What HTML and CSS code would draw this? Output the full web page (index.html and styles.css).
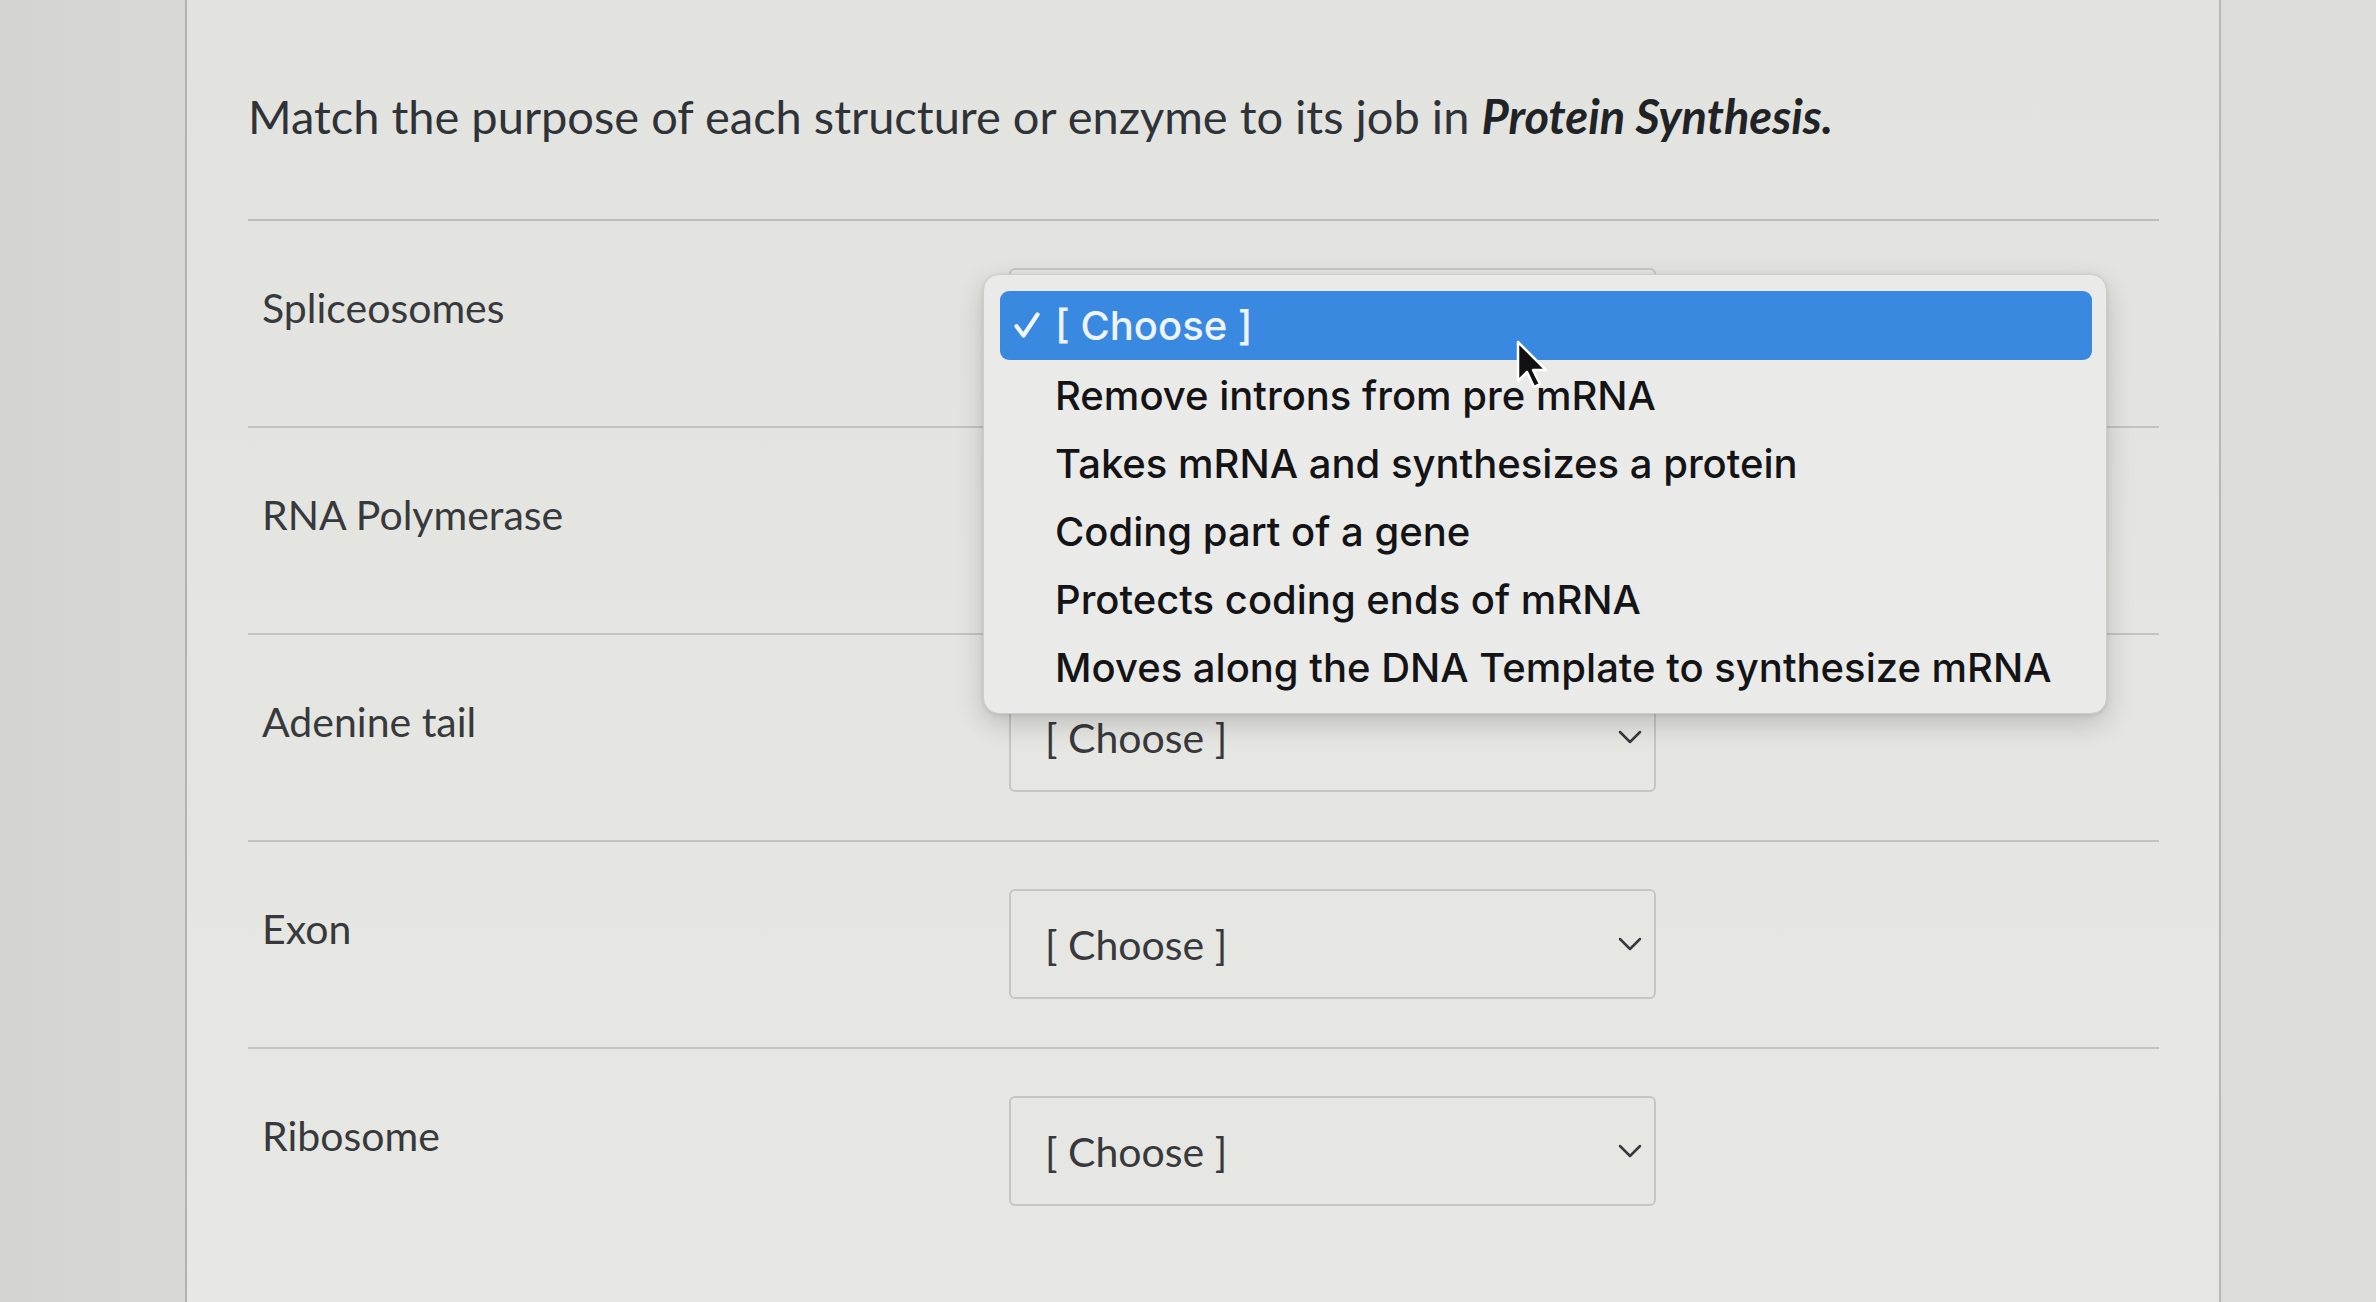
FILE: index.html
```html
<!DOCTYPE html>
<html lang="en">
<head>
<meta charset="utf-8">
<title>Protein Synthesis matching</title>
<link rel="stylesheet" href="styles.css">
</head>
<body>
<div class="page">
  <div class="gutter-left"></div>
  <main class="panel">
    <h1 class="question">Match the purpose of each structure or enzyme to its job in <em>Protein Synthesis.</em></h1>
    <div class="rows">
      <div class="row">
        <div class="label">Spliceosomes</div>
        <div class="select-wrap">
          <div class="select"><span class="select-text">[ Choose ]</span><svg class="chev" viewBox="0 0 24 14"><path d="M2 2 L12 12 L22 2"/></svg></div>
          <div class="menu">
            <div class="opt selected"><svg class="check" viewBox="0 0 24 24"><path d="M3 13 L9 21 L21 3"/></svg>[ Choose ]</div>
            <div class="opt">Remove introns from pre mRNA</div>
            <div class="opt">Takes mRNA and synthesizes a protein</div>
            <div class="opt">Coding part of a gene</div>
            <div class="opt">Protects coding ends of mRNA</div>
            <div class="opt">Moves along the DNA Template to synthesize mRNA</div>
            <svg class="cursor" viewBox="0 0 34 52"><path d="M3 3 L3 42 L12 33 L19 48 L25 45 L18 31 L31 31 Z"/></svg>
          </div>
        </div>
      </div>
      <div class="row">
        <div class="label">RNA Polymerase</div>
        <div class="select-wrap">
          <div class="select"><span class="select-text">[ Choose ]</span><svg class="chev" viewBox="0 0 24 14"><path d="M2 2 L12 12 L22 2"/></svg></div>
        </div>
      </div>
      <div class="row">
        <div class="label">Adenine tail</div>
        <div class="select-wrap">
          <div class="select"><span class="select-text">[ Choose ]</span><svg class="chev" viewBox="0 0 24 14"><path d="M2 2 L12 12 L22 2"/></svg></div>
        </div>
      </div>
      <div class="row">
        <div class="label">Exon</div>
        <div class="select-wrap">
          <div class="select"><span class="select-text">[ Choose ]</span><svg class="chev" viewBox="0 0 24 14"><path d="M2 2 L12 12 L22 2"/></svg></div>
        </div>
      </div>
      <div class="row last">
        <div class="label">Ribosome</div>
        <div class="select-wrap">
          <div class="select"><span class="select-text">[ Choose ]</span><svg class="chev" viewBox="0 0 24 14"><path d="M2 2 L12 12 L22 2"/></svg></div>
        </div>
      </div>
    </div>
  </main>
  <div class="gutter-right"></div>
</div>
</body>
</html>
```
FILE: styles.css
```css
html, body {
  margin: 0;
  padding: 0;
}
body {
  width: 2376px;
  height: 1302px;
  overflow: hidden;
  background: #d9d9d5;
  font-family: Lato, "Liberation Sans", sans-serif;
}
.page {
  display: flex;
  height: 1302px;
}
.gutter-left {
  width: 185px;
  background: linear-gradient(90deg, #d4d4d0, #d8d8d4);
}
.gutter-right {
  flex: 1;
  background: #dcdcd8;
}
.panel {
  width: 2036px;
  border-left: 2px solid #b3b3af;
  border-right: 2px solid #b8b8b4;
  background: linear-gradient(180deg, #e2e2df 0%, #e5e5e2 60%, #e7e7e4 100%);
  padding: 0 60px 0 61px;
  box-sizing: border-box;
}
.question {
  margin: 0;
  padding-top: 88px;
  height: 221px;
  box-sizing: border-box;
  font-size: 47px;
  line-height: 56px;
  font-weight: 400;
  color: #2f3337;
  border-bottom: 2px solid #bdbdb9;
}
.question em {
  font-weight: 700;
  font-style: italic;
  color: #1f2326;
}
.row {
  display: grid;
  grid-template-columns: 761px 647px;
  height: 207px;
  box-sizing: border-box;
  border-bottom: 2px solid #c3c3bf;
}
.row.last {
  border-bottom: none;
}
.label {
  padding-left: 14px;
  padding-top: 63px;
  font-size: 41px;
  line-height: 48px;
  color: #37393c;
}
.select-wrap {
  position: relative;
  padding-top: 47px;
}
.select {
  height: 110px;
  box-sizing: border-box;
  border: 2px solid #c6c6c2;
  border-radius: 6px;
  background: #e6e6e3;
  display: flex;
  align-items: center;
  justify-content: space-between;
  padding: 0 12px 0 34px;
}
.select-text {
  font-size: 41px;
  color: #37393c;
}
.chev {
  width: 24px;
  height: 14px;
  fill: none;
  stroke: #37393c;
  stroke-width: 2.5;
  stroke-linecap: round;
  stroke-linejoin: round;
}
.menu {
  position: absolute;
  left: -26px;
  top: 53px;
  width: 1124px;
  height: 440px;
  box-sizing: border-box;
  padding: 16px 14px 0 16px;
  background: #eaeae8;
  border: 1px solid #cdcdca;
  border-radius: 16px;
  box-shadow: 0 10px 28px rgba(0, 0, 0, 0.18), 0 1px 4px rgba(0, 0, 0, 0.1);
  font-family: Inter, "Noto Sans", sans-serif;
  z-index: 5;
}
.opt {
  height: 68px;
  line-height: 72px;
  padding-left: 55px;
  font-size: 40px;
  font-weight: 500;
  color: #141416;
  position: relative;
  white-space: nowrap;
}
.opt.selected {
  height: 69px;
  line-height: 69px;
  background: #3a89e0;
  border-radius: 9px;
  color: #eef4ff;
}
.check {
  position: absolute;
  left: 13px;
  top: 20px;
  width: 28px;
  height: 28px;
  fill: none;
  stroke: #f2f6ff;
  stroke-width: 3.6;
  stroke-linecap: round;
  stroke-linejoin: round;
}
.cursor {
  position: absolute;
  left: 531px;
  top: 64px;
  width: 34px;
  height: 52px;
  fill: #111;
  stroke: #fff;
  stroke-width: 2.5;
  stroke-linejoin: round;
}
```
